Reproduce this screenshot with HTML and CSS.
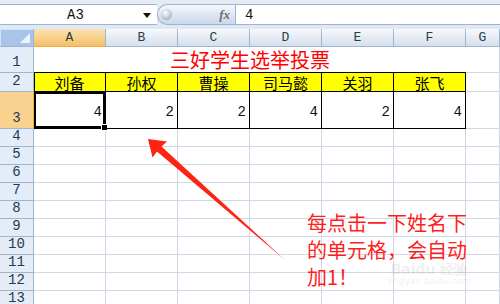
FILE: index.html
```html
<!DOCTYPE html>
<html lang="zh">
<head>
  <meta charset="UTF-8">
  <title>三好学生选举投票</title>
  <link rel="stylesheet" href="styles.css">
</head>
<body>
  <div class="app">
    <!-- formula bar -->
    <div class="fbar">
      <div class="namebox">
        <span class="ref">A3</span>
        <span class="dd"></span>
      </div>
      <div class="pill">
        <span class="knob"></span>
        <span class="fx">fx</span>
      </div>
      <div class="finput">4</div>
    </div>

    <!-- sheet -->
    <div class="sheet">
      <div class="corner"><span class="tri"></span></div>
      <div class="col on">A</div>
      <div class="col">B</div>
      <div class="col">C</div>
      <div class="col">D</div>
      <div class="col">E</div>
      <div class="col">F</div>
      <div class="col">G</div>

      <div class="hdr">1</div>
      <div class="cell title">三好学生选举投票</div>
      <div class="cell"></div>

      <div class="hdr">2</div>
      <div class="cell name first">刘备</div>
      <div class="cell name">孙权</div>
      <div class="cell name">曹操</div>
      <div class="cell name">司马懿</div>
      <div class="cell name">关羽</div>
      <div class="cell name">张飞</div>
      <div class="cell"></div>

      <div class="hdr on">3</div>
      <div class="cell num first sel">4<span class="handle"></span></div>
      <div class="cell num">2</div>
      <div class="cell num">2</div>
      <div class="cell num">4</div>
      <div class="cell num">2</div>
      <div class="cell num">4</div>
      <div class="cell"></div>

      <div class="hdr">4</div><div class="cell"></div><div class="cell"></div><div class="cell"></div><div class="cell"></div><div class="cell"></div><div class="cell"></div><div class="cell"></div>
      <div class="hdr">5</div><div class="cell"></div><div class="cell"></div><div class="cell"></div><div class="cell"></div><div class="cell"></div><div class="cell"></div><div class="cell"></div>
      <div class="hdr">6</div><div class="cell"></div><div class="cell"></div><div class="cell"></div><div class="cell"></div><div class="cell"></div><div class="cell"></div><div class="cell"></div>
      <div class="hdr">7</div><div class="cell"></div><div class="cell"></div><div class="cell"></div><div class="cell"></div><div class="cell"></div><div class="cell"></div><div class="cell"></div>
      <div class="hdr">8</div><div class="cell"></div><div class="cell"></div><div class="cell"></div><div class="cell"></div><div class="cell"></div><div class="cell"></div><div class="cell"></div>
      <div class="hdr">9</div><div class="cell"></div><div class="cell"></div><div class="cell"></div><div class="cell"></div><div class="cell"></div><div class="cell"></div><div class="cell"></div>
      <div class="hdr">10</div><div class="cell"></div><div class="cell"></div><div class="cell"></div><div class="cell"></div><div class="cell"></div><div class="cell"></div><div class="cell"></div>
      <div class="hdr">11</div><div class="cell"></div><div class="cell"></div><div class="cell"></div><div class="cell"></div><div class="cell"></div><div class="cell"></div><div class="cell"></div>
      <div class="hdr">12</div><div class="cell"></div><div class="cell"></div><div class="cell"></div><div class="cell"></div><div class="cell"></div><div class="cell"></div><div class="cell"></div>
      <div class="hdr">13</div><div class="cell"></div><div class="cell"></div><div class="cell"></div><div class="cell"></div><div class="cell"></div><div class="cell"></div><div class="cell"></div>
    </div>

    <!-- annotation over the sheet -->
    <svg class="arrow" width="500" height="304" viewBox="0 0 500 304">
      <polygon points="148,139 167,141.5 161.5,146.5 285,260 157,151.5 152.5,157.5" fill="#ff2314"/>
    </svg>
    <div class="mark">
      <span class="logo">Baidu 经验</span>
      <span class="url">jingyan.baidu.com</span>
    </div>
    <div class="note">每点击一下姓名下<br>的单元格，会自动<br>加1！</div>
  </div>
</body>
</html>
```

FILE: styles.css
```css
body {
  margin: 0;
  background: #fff;
  font-family: "Liberation Mono", "DejaVu Sans Mono", monospace;
}

.app {
  position: relative;
  width: 500px;
  height: 304px;
  overflow: hidden;
}

/* formula bar */
.fbar {
  display: flex;
  height: 29px;
  box-sizing: border-box;
  padding: 4px 0;
  background: linear-gradient(#e4ebf5, #dfe8f5);
}

.namebox,
.pill,
.finput {
  border-top: 1px solid #9db3d0;
  border-bottom: 1px solid #9db3d0;
}

.namebox {
  display: flex;
  align-items: center;
  width: 157px;
  background: #fff;
  font-size: 14px;
  color: #111;
}

.namebox .ref {
  flex: 1;
  text-align: center;
  padding-left: 8px;
}

.dd {
  width: 0;
  height: 0;
  margin: 1px 6px 0 0;
  border-left: 4px solid transparent;
  border-right: 4px solid transparent;
  border-top: 5px solid #111;
}

.pill {
  display: flex;
  align-items: center;
  justify-content: space-between;
  width: 78px;
  padding: 0 5px 0 3px;
  box-sizing: border-box;
  border-left: 1px solid #9db3d0;
  border-radius: 10px 0 0 10px;
  background: linear-gradient(#f6f8fc, #dbe5f2 55%, #cbd8ea);
}

.knob {
  width: 11px;
  height: 11px;
  border-radius: 50%;
  background: radial-gradient(circle at 40% 35%, #ffffff, #b7c3d1 60%, #8d9aab);
}

.fx {
  font-family: "Liberation Serif", serif;
  font-style: italic;
  font-weight: bold;
  font-size: 13px;
  color: #6d6d6d;
}

.finput {
  flex: 1;
  display: flex;
  align-items: center;
  padding-left: 9px;
  border-left: 1px solid #9db3d0;
  background: #fff;
  font-size: 14px;
  color: #111;
}

/* sheet grid */
.sheet {
  display: grid;
  grid-template-columns: 34px repeat(6, 72px) 1fr;
  grid-template-rows: 18px 26px 19px 37px repeat(10, 18px);
}

.sheet > div {
  box-sizing: border-box;
}

.corner {
  position: relative;
  background: #a9c4e9;
  border-right: 1px solid #9eb6ce;
  border-bottom: 1px solid #9eb6ce;
  box-shadow: inset 1px 1px 0 #d6e3f4;
}

.tri {
  position: absolute;
  right: 3px;
  bottom: 3px;
  width: 0;
  height: 0;
  border-left: 10px solid transparent;
  border-bottom: 10px solid #eef3fa;
}

.col {
  display: flex;
  align-items: center;
  justify-content: center;
  font-size: 13px;
  color: #27413e;
  background: linear-gradient(#f7f9fd, #e4eaf4 55%, #d7e0ec);
  border-right: 1px solid #9eb6ce;
  border-bottom: 1px solid #9eb6ce;
}

.col.on {
  background: linear-gradient(#fbe2b0, #f8d08a 55%, #f2c16a);
  border-bottom-color: #f2a93b;
}

.hdr {
  display: flex;
  align-items: flex-end;
  justify-content: center;
  padding-bottom: 2px;
  font-size: 14px;
  line-height: 16px;
  color: #1e3b52;
  background: #e4ecf7;
  border-right: 1px solid #9eb6ce;
  border-bottom: 1px solid #9eb6ce;
}

.hdr.on {
  background: #fad28f;
  border-right-color: #f2a93b;
}

.cell {
  border-right: 1px solid #d0d7e5;
  border-bottom: 1px solid #d0d7e5;
}

.title {
  grid-column: span 6;
  display: flex;
  align-items: center;
  justify-content: center;
  padding-top: 1px;
  font-family: "Noto Sans CJK SC", sans-serif;
  font-size: 20px;
  line-height: 22px;
  color: #ff0000;
  border-right: none;
  border-bottom: 1px solid #000;
}

.name {
  display: flex;
  align-items: flex-end;
  justify-content: center;
  font-family: "Noto Sans CJK SC", sans-serif;
  font-size: 15px;
  line-height: 17px;
  color: #000;
  background: #ffff00;
  border-right-color: #000;
  border-bottom-color: #000;
}

.num {
  position: relative;
  display: flex;
  align-items: center;
  justify-content: flex-end;
  padding: 3px 3px 0 0;
  font-size: 14px;
  color: #111;
  border-right-color: #000;
  border-bottom-color: #000;
}

.first {
  box-shadow: inset 1px 0 0 #000;
}

.sel {
  box-shadow: inset 0 0 0 2px #000;
}

.handle {
  position: absolute;
  right: -3px;
  bottom: -3px;
  width: 5px;
  height: 5px;
  background: #000;
  border: 1px solid #fff;
}

/* overlays */
.arrow {
  position: absolute;
  left: 0;
  top: 0;
}

.note {
  position: absolute;
  left: 307px;
  top: 209px;
  font-family: "Noto Sans CJK SC", sans-serif;
  font-size: 20px;
  line-height: 27px;
  color: #ff1e1e;
}

.mark {
  position: absolute;
  left: 388px;
  top: 262px;
  display: flex;
  flex-direction: column;
  align-items: center;
  color: rgba(160, 160, 160, 0.18);
  font-family: "DejaVu Sans", sans-serif;
  line-height: 1.1;
}

.mark .logo {
  font-size: 14px;
  font-weight: bold;
}

.mark .url {
  font-size: 9px;
}
```
